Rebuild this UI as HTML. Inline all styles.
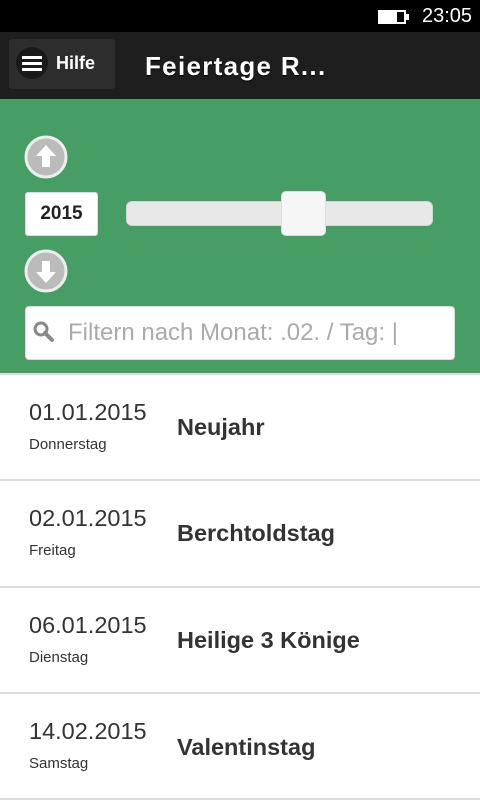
<!DOCTYPE html>
<html><head><meta charset="utf-8"><style>
*{margin:0;padding:0;box-sizing:border-box}
body{width:480px;height:800px;overflow:hidden;font-family:"Liberation Sans",sans-serif;background:#fff;position:relative}
.a{position:absolute}
.d{font-size:23.5px;color:#333}
.w{font-size:15px;color:#333}
.n{font-size:23.5px;font-weight:bold;color:#333}
</style></head><body>
<div class="a" style="left:0;top:0;width:480px;height:32px;background:#000"></div>
<div class="a" style="left:378px;top:10px;width:28px;height:14px;border:2px solid #fff"><div style="width:17px;height:10px;background:#fff;margin:0"></div></div>
<div class="a" style="left:406px;top:14px;width:3px;height:6px;background:#fff"></div>
<div class="a" style="left:422px;top:5px;color:#fff;font-size:20px">23:05</div>
<div class="a" style="left:0;top:32px;width:480px;height:67px;background:#1e1e1e"></div>
<div class="a" style="left:9px;top:39px;width:106px;height:50px;background:#2d2d2d;border-radius:3px"></div>
<div class="a" style="left:16px;top:47px;width:32px;height:32px;background:#1a1a1a;border-radius:50%"></div>
<div class="a" style="left:22px;top:56px;width:20px;height:3px;background:#fff;box-shadow:0 6px 0 #fff,0 12px 0 #fff"></div>
<div class="a" style="left:56px;top:53px;color:#fff;font-weight:bold;font-size:18px">Hilfe</div>
<div class="a" style="left:145px;top:51px;color:#fff;font-weight:bold;font-size:26px;letter-spacing:1.3px;text-shadow:0 1px 1px #000">Feiertage R...</div>
<div class="a" style="left:0;top:99px;width:480px;height:274px;background:#469e64"></div>
<svg class="a" style="left:24px;top:135px" width="44" height="44"><circle cx="22" cy="22" r="20" fill="#bbb" stroke="#eee" stroke-width="3"/><path d="M22 10 L32 21 L26 21 L26 32 L18 32 L18 21 L12 21Z" fill="#fff"/></svg>
<svg class="a" style="left:24px;top:249px" width="44" height="44"><circle cx="22" cy="22" r="20" fill="#bbb" stroke="#eee" stroke-width="3"/><path d="M22 34 L32 23 L26 23 L26 12 L18 12 L18 23 L12 23Z" fill="#fff"/></svg>
<div class="a" style="left:25px;top:192px;width:73px;height:44px;background:#fff;border:1px solid #ddd;border-radius:3px;font-weight:bold;font-size:19px;color:#222;text-align:center;line-height:42px">2015</div>
<div class="a" style="left:126px;top:201px;width:307px;height:25px;background:#e8e8e8;border:1px solid #d4d4d4;border-radius:6px"></div>
<div class="a" style="left:281px;top:191px;width:45px;height:45px;background:#f6f6f6;border:1px solid #ddd;border-radius:5px"></div>
<div class="a" style="left:25px;top:306px;width:430px;height:54px;background:#fff;border:1px solid #ddd;border-radius:4px"></div>
<svg class="a" style="left:33px;top:321px" width="22" height="22"><circle cx="8" cy="8" r="6" fill="none" stroke="#888" stroke-width="3"/><path d="M12 12 L19 19" stroke="#888" stroke-width="4" stroke-linecap="round"/></svg>
<div class="a" style="left:68px;top:319px;color:#aaa;font-size:24px;white-space:nowrap">Filtern nach Monat: .02. / Tag: |</div>
<div class="a" style="left:0;top:373px;width:480px;height:2px;background:#ddd"></div>

<div class="a d" style="left:29px;top:399px">01.01.2015</div>
<div class="a w" style="left:29px;top:436px">Donnerstag</div>
<div class="a n" style="left:177px;top:414px">Neujahr</div>
<div class="a" style="left:0;top:479px;width:480px;height:2px;background:#ddd"></div>

<div class="a d" style="left:29px;top:505px">02.01.2015</div>
<div class="a w" style="left:29px;top:542px">Freitag</div>
<div class="a n" style="left:177px;top:520px">Berchtoldstag</div>
<div class="a" style="left:0;top:586px;width:480px;height:2px;background:#ddd"></div>

<div class="a d" style="left:29px;top:612px">06.01.2015</div>
<div class="a w" style="left:29px;top:649px">Dienstag</div>
<div class="a n" style="left:177px;top:627px">Heilige 3 Könige</div>
<div class="a" style="left:0;top:692px;width:480px;height:2px;background:#ddd"></div>

<div class="a d" style="left:29px;top:718px">14.02.2015</div>
<div class="a w" style="left:29px;top:755px">Samstag</div>
<div class="a n" style="left:177px;top:734px">Valentinstag</div>
<div class="a" style="left:0;top:798px;width:480px;height:2px;background:#ddd"></div>
</body></html>
